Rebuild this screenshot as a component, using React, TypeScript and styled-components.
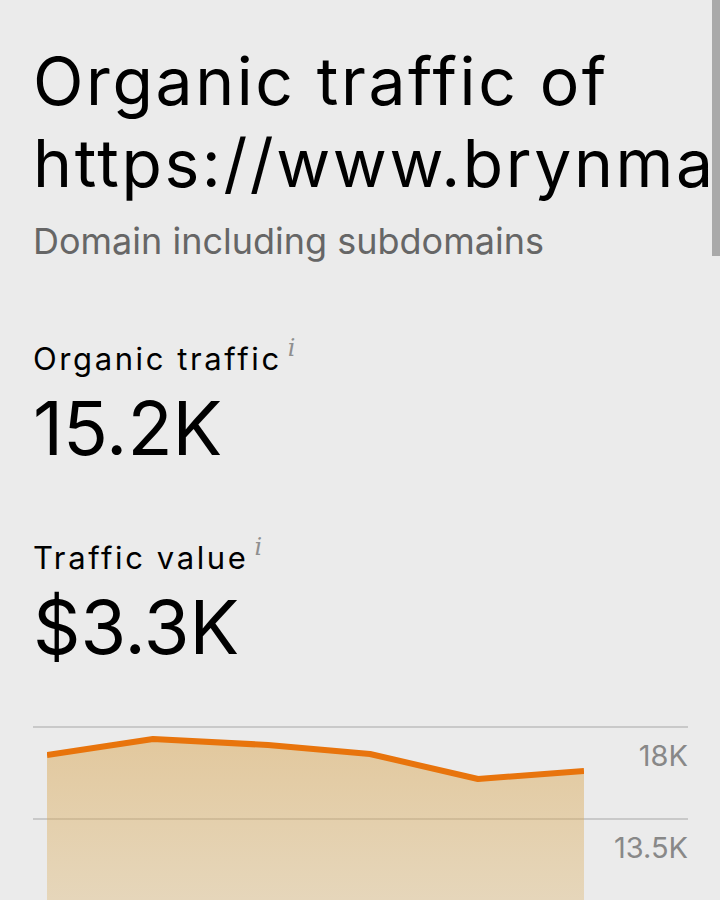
import styled, { createGlobalStyle } from 'styled-components';

const GlobalStyle = createGlobalStyle`
  html, body {
    margin: 0;
    padding: 0;
    background: #ebebeb;
    overflow: hidden;
  }
  body {
    font-family: 'Inter', 'Roboto', sans-serif;
    color: #000;
  }
`;

const Page = styled.div`
  width: 720px;
  height: 900px;
  overflow: hidden;
  padding: 40px 0 0 33px;
  box-sizing: border-box;
`;

const Title = styled.h1`
  margin: 0;
  font-size: 66px;
  font-weight: 400;
  line-height: 82px;
  letter-spacing: 2.6px;
  white-space: nowrap;
`;

const Subtitle = styled.div`
  margin-top: 15px;
  font-size: 36px;
  color: #666;
`;

const Metric = styled.div<{ $gap: number }>`
  margin-top: ${(p) => p.$gap}px;
  display: flex;
  flex-direction: column;
`;

const Label = styled.div`
  font-size: 31px;
  letter-spacing: 2.6px;
  display: flex;
  align-items: flex-start;
  gap: 6px;
`;

const Info = styled.span`
  font-family: 'DejaVu Serif', serif;
  font-style: italic;
  font-size: 24px;
  color: #8f8f8f;
  line-height: 1;
  margin-top: -4px;
  letter-spacing: 0;
`;

const Value = styled.div`
  font-size: 74px;
  line-height: 1.1;
  margin-top: 11px;
`;

const Chart = styled.div`
  position: relative;
  margin-top: 57px;
  width: 655px;
`;

const GridRow = styled.div`
  height: 90px;
  border-top: 2px solid #c9c9c9;
  display: flex;
  justify-content: flex-end;
  align-items: flex-start;
`;

const Tick = styled.span`
  margin-top: 10px;
  font-size: 29px;
  color: #888;
`;

const Area = styled.svg`
  position: absolute;
  left: 14px;
  top: 0;
`;

const Thumb = styled.div`
  position: fixed;
  top: 0;
  right: 0;
  width: 8px;
  height: 256px;
  background: #a9a9a9;
`;

const points: [number, number][] = [
  [0, 29],
  [106, 13],
  [221, 19],
  [323, 28],
  [431, 53],
  [537, 45],
];

const App = () => {
  const line = points.map(([x, y]) => `${x},${y}`).join(' ');
  const area = `0,200 ${line} 537,200`;
  return (
    <>
      <GlobalStyle />
      <Page>
        <Title>
          Organic traffic of
          <br />
          https://www.brynmawr.edu/
        </Title>
        <Subtitle>Domain including subdomains</Subtitle>

        <Metric $gap={77}>
          <Label>
            Organic traffic<Info>i</Info>
          </Label>
          <Value>15.2K</Value>
        </Metric>

        <Metric $gap={70}>
          <Label>
            Traffic value<Info>i</Info>
          </Label>
          <Value>$3.3K</Value>
        </Metric>

        <Chart>
          <GridRow>
            <Tick>18K</Tick>
          </GridRow>
          <GridRow>
            <Tick>13.5K</Tick>
          </GridRow>
          <Area width="537" height="200" viewBox="0 0 537 200">
            <defs>
              <linearGradient id="fill" x1="0" y1="0" x2="0" y2="1">
                <stop offset="0%" stopColor="#d9a550" stopOpacity="0.5" />
                <stop offset="100%" stopColor="#dcb060" stopOpacity="0.32" />
              </linearGradient>
            </defs>
            <polygon points={area} fill="url(#fill)" />
            <polyline
              points={line}
              fill="none"
              stroke="#e8740c"
              strokeWidth="6"
              strokeLinejoin="round"
            />
          </Area>
        </Chart>
      </Page>
      <Thumb />
    </>
  );
};

export default App;
